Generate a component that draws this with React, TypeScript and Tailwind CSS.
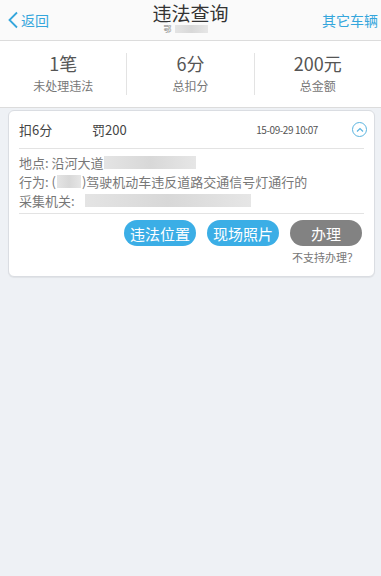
import React from "react";

const font = { fontFamily: '"Noto Sans CJK SC", "Noto Sans", sans-serif' };

function Blur({ w, h = 14, className = "" }: { w: number; h?: number; className?: string }) {
  return (
    <span
      className={`inline-block align-middle bg-gradient-to-r from-[#e4e4e4] via-[#d8d8d8] to-[#e6e6e6] ${className}`}
      style={{ width: w, height: h }}
    />
  );
}

export default function App() {
  return (
    <div className="w-[381px] h-[576px] bg-[#eef1f5] overflow-hidden" style={font}>
      {/* Header */}
      <div className="relative h-[41px] bg-[#fafafa] border-b border-[#dcdcdc] flex items-center justify-between pl-[7px] pr-[3px]">
        <div className="flex items-center text-[#35a6dc] text-[14px] leading-none">
          <svg width="12" height="18" viewBox="0 0 12 18" className="mr-[2px]">
            <path d="M10 1.5 L2.5 9 L10 16.5" fill="none" stroke="#35a6dc" strokeWidth="1.8" />
          </svg>
          <span>返回</span>
        </div>
        <div className="absolute left-0 right-0 top-0 flex flex-col items-center pointer-events-none">
          <div className="text-[19px] leading-[23px] text-[#333] mt-[1px]">违法查询</div>
          <div className="flex items-center ml-[-10px]">
            <span className="text-[8px] leading-[10px] text-[#888]">鄂</span>
            <Blur w={33} h={8} className="ml-[3px]" />
          </div>
        </div>
        <div className="text-[#35a6dc] text-[14px] leading-none">其它车辆</div>
      </div>

      {/* Stats */}
      <div className="h-[67px] bg-white border-b border-[#dcdcdc] flex items-center">
        {[
          ["1笔", "未处理违法"],
          ["6分", "总扣分"],
          ["200元", "总金额"],
        ].map(([v, l], i) => (
          <div
            key={i}
            className={`flex-1 h-[42px] flex flex-col items-center justify-center ${i < 2 ? "border-r border-[#e3e3e3]" : ""}`}
          >
            <div className="text-[18px] leading-[26px] text-[#555] mt-[-2px]">{v}</div>
            <div className="text-[12px] leading-[20px] text-[#777]">{l}</div>
          </div>
        ))}
      </div>

      {/* Card */}
      <div className="ml-[8px] mr-[6px] mt-[2px] bg-white border border-[#dadde2] rounded-[6px] shadow-[0_1px_1px_rgba(0,0,0,0.06)] px-[10px] pb-[12px]">
        <div className="h-[38px] flex items-center text-[13px] text-[#444] border-b border-[#e3e3e3]">
          <span className="w-[73px]">扣6分</span>
          <span>罚200</span>
          <span className="ml-auto text-[10px] tracking-[-0.4px] text-[#555] mr-[34px]">15-09-29 10:07</span>
          <span className="w-[15px] h-[15px] rounded-full border border-[#5ab4e0] flex items-center justify-center mr-[-3px]">
            <svg width="8" height="6" viewBox="0 0 8 6">
              <path d="M1 4.5 L4 1.5 L7 4.5" fill="none" stroke="#5ab4e0" strokeWidth="1.2" />
            </svg>
          </span>
        </div>
        <div className="pt-[4px] pb-[3px] text-[13px] leading-[19px] text-[#777] border-b border-[#e3e3e3]">
          <div className="flex items-center">
            地点: 沿河大道<Blur w={92} h={13} />
          </div>
          <div className="flex items-center">
            行为: (<Blur w={24} h={13} className="mx-[1px]" />)驾驶机动车违反道路交通信号灯通行的
          </div>
          <div className="flex items-center">
            采集机关:<Blur w={166} h={13} className="ml-[10px]" />
          </div>
        </div>
        <div className="flex justify-end gap-[11px] pt-[6px] pr-[2px]">
          <button className="w-[72px] h-[26px] rounded-full bg-[#3baee6] text-white text-[15px] leading-none">违法位置</button>
          <button className="w-[72px] h-[26px] rounded-full bg-[#3baee6] text-white text-[15px] leading-none">现场照片</button>
          <button className="w-[72px] h-[26px] rounded-full bg-[#828282] text-white text-[15px] leading-none">办理</button>
        </div>
        <div className="text-right text-[11px] text-[#777] pr-[6px] mt-[4px] leading-[14px]">不支持办理？</div>
      </div>
    </div>
  );
}
